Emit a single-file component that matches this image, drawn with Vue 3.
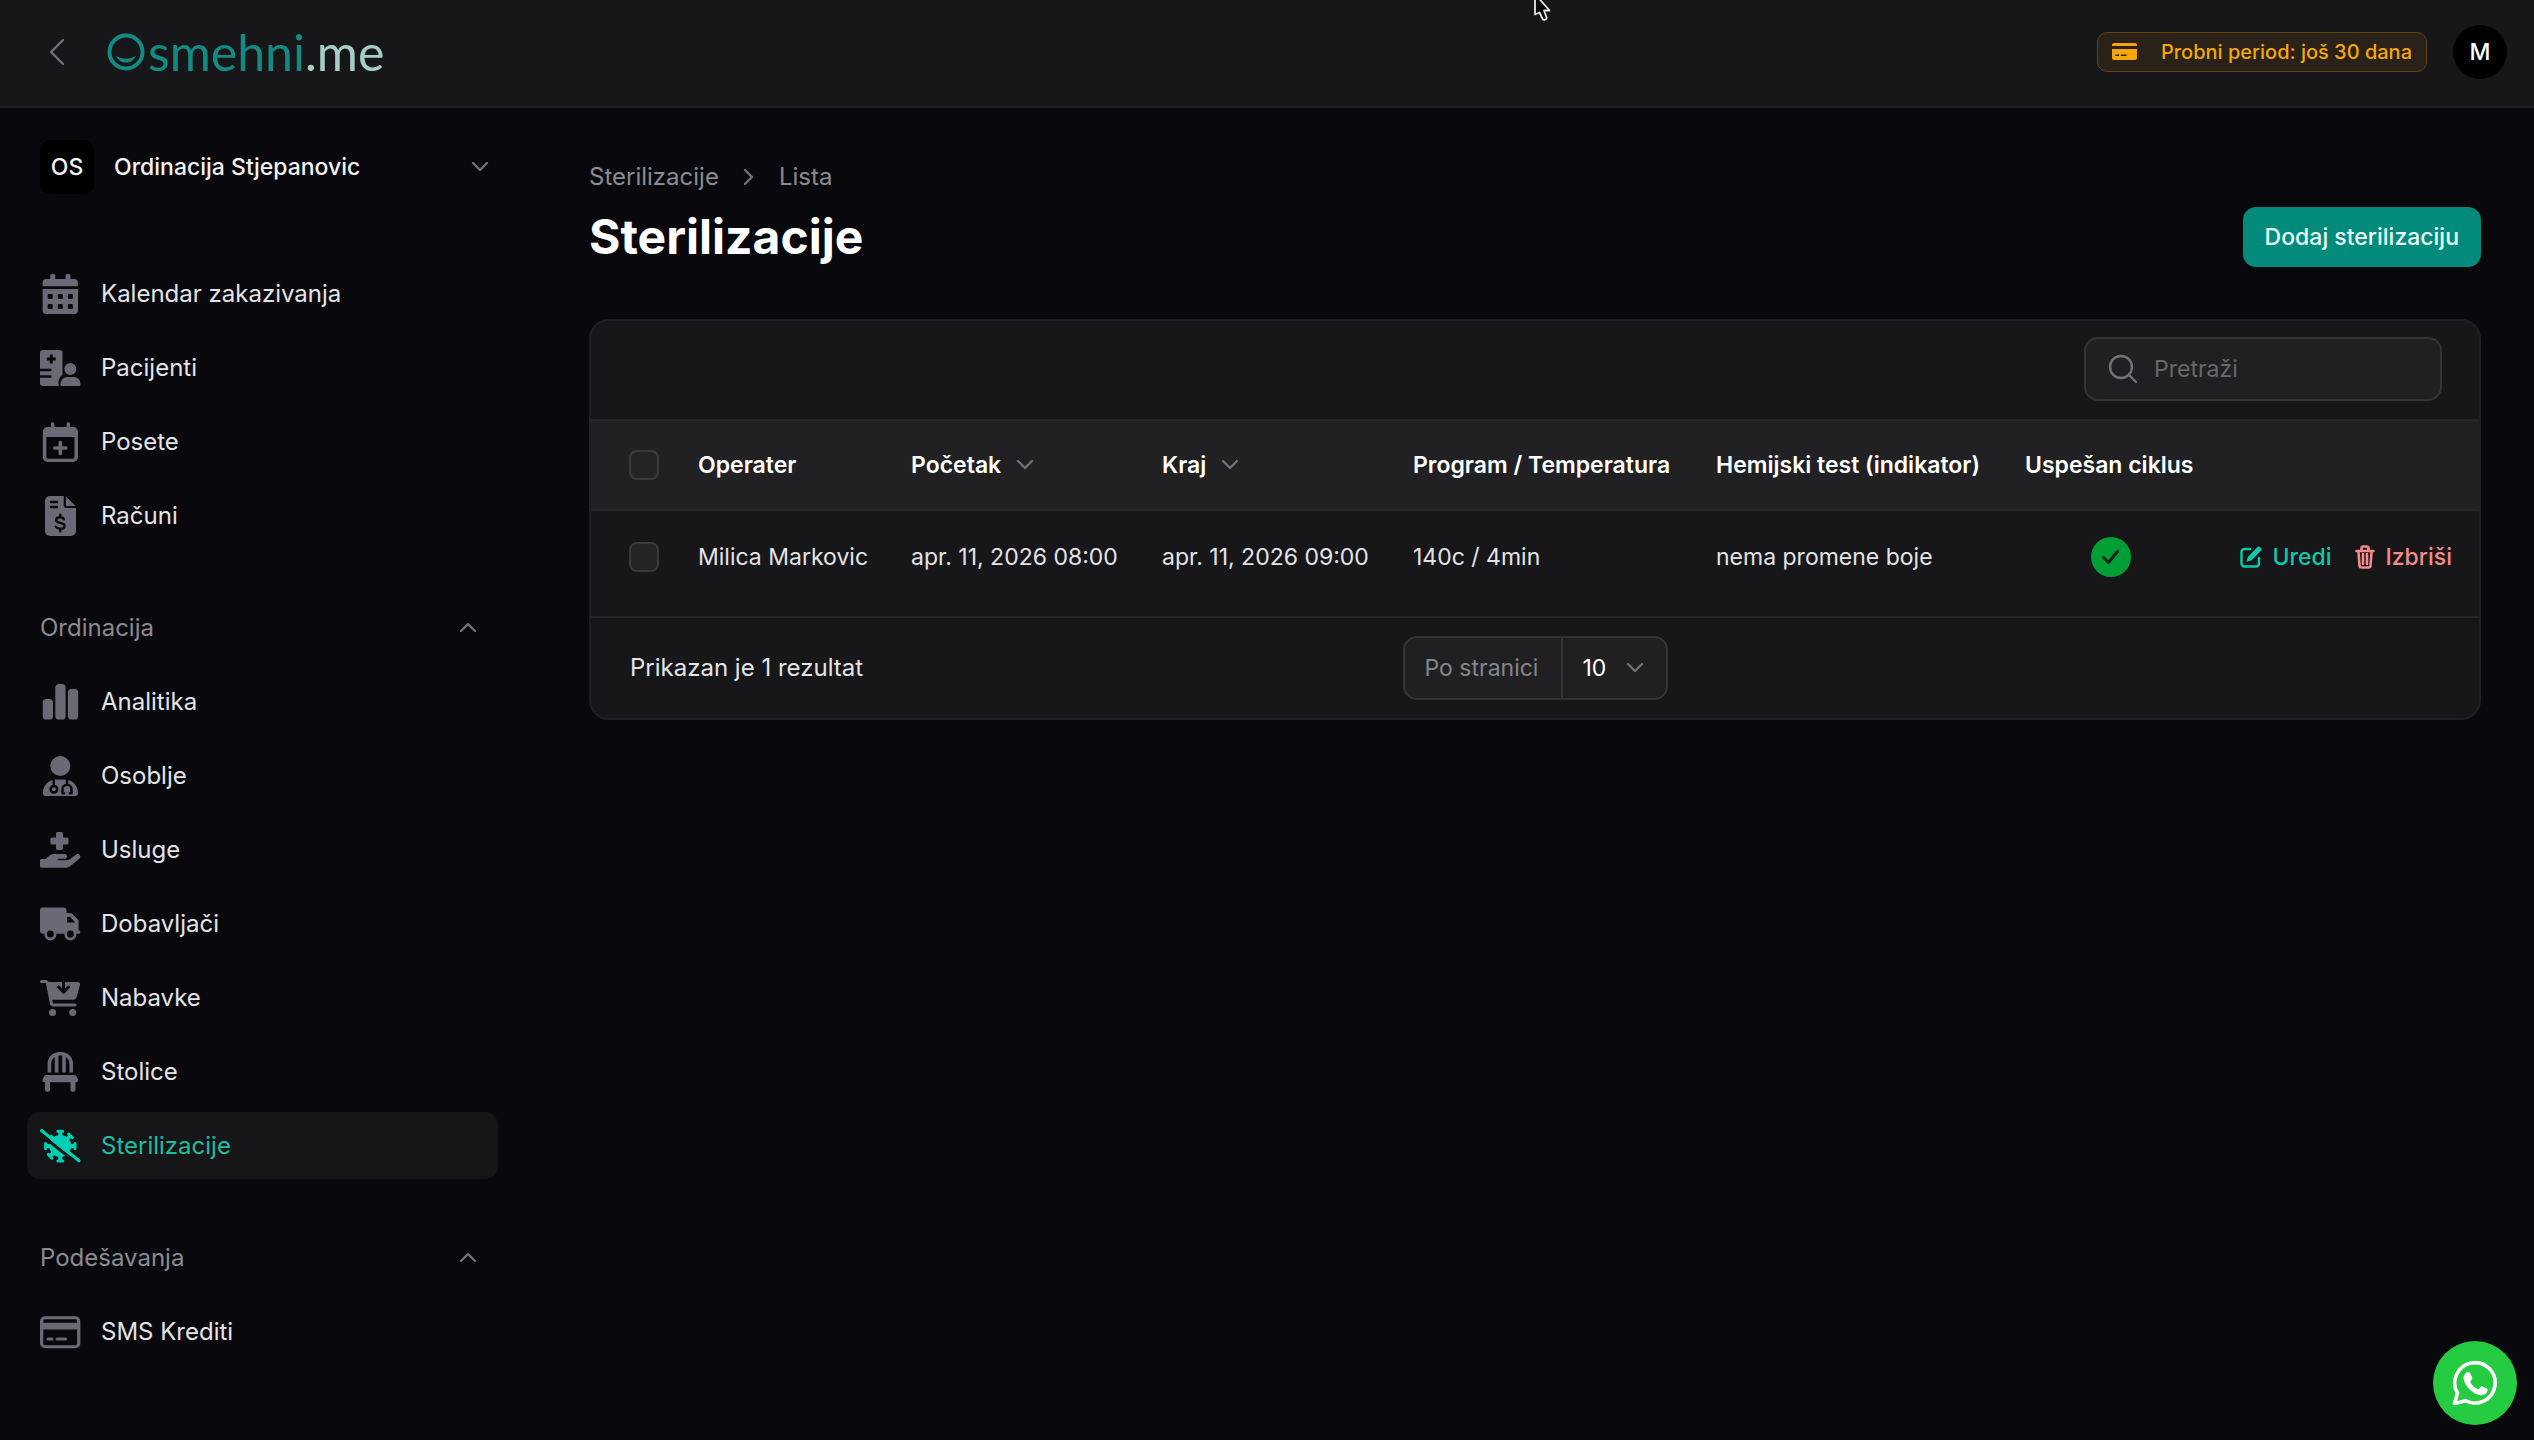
<script setup>
import { ref } from 'vue'

const mainItems = [
  { label: 'Kalendar zakazivanja', icon: 'calendar' },
  { label: 'Pacijenti', icon: 'patients' },
  { label: 'Posete', icon: 'visits' },
  { label: 'Računi', icon: 'invoice' },
]

const groups = [
  {
    label: 'Ordinacija',
    items: [
      { label: 'Analitika', icon: 'chart' },
      { label: 'Osoblje', icon: 'doctor' },
      { label: 'Usluge', icon: 'services' },
      { label: 'Dobavljači', icon: 'truck' },
      { label: 'Nabavke', icon: 'cart' },
      { label: 'Stolice', icon: 'chair' },
      { label: 'Sterilizacije', icon: 'virus', active: true },
    ],
  },
  { label: 'Podešavanja', items: [{ label: 'SMS Krediti', icon: 'card' }] },
]

const sections = [{ label: '', items: mainItems }, ...groups]

// Filled shapes on a 40 x 40 grid
const icons = {
  calendar:
    '<path fill-rule="evenodd" d="M10.3 1.5a1.5 1.5 0 0 1 1.5-1.5h2a1.5 1.5 0 0 1 1.5 1.5V5h10.2V1.500a1.500 1.500 0 0 1 1.500-1.500h2a1.500 1.500 0 0 1 1.500 1.500V5h3.700a3.700 3.700 0 0 1 3.700 3.700V12.300H2.600V8.700A3.700 3.700 0 0 1 6.300 5h4zM2.600 15h35.400v21.300a3.700 3.700 0 0 1-3.700 3.700H6.300a3.700 3.700 0 0 1-3.700-3.700zM8.700 20a1 1 0 0 0-1 1v3a1 1 0 0 0 1 1h3a1 1 0 0 0 1-1v-3a1 1 0 0 0-1-1zM18.800 20a1 1 0 0 0-1 1v3a1 1 0 0 0 1 1h3a1 1 0 0 0 1-1v-3a1 1 0 0 0-1-1zM28.900 20a1 1 0 0 0-1 1v3a1 1 0 0 0 1 1h3a1 1 0 0 0 1-1v-3a1 1 0 0 0-1-1zM8.700 30a1 1 0 0 0-1 1v3a1 1 0 0 0 1 1h3a1 1 0 0 0 1-1v-3a1 1 0 0 0-1-1zM18.800 30a1 1 0 0 0-1 1v3a1 1 0 0 0 1 1h3a1 1 0 0 0 1-1v-3a1 1 0 0 0-1-1zM28.900 30a1 1 0 0 0-1 1v3a1 1 0 0 0 1 1h3a1 1 0 0 0 1-1v-3a1 1 0 0 0-1-1z"/>',
  patients:
    '<path d="M3 2h16.500a3 3 0 0 1 3 3v22c-2.500 1.500-4 4.300-4 7.500 0 1.300 0 2.500.7 3.500H3a3 3 0 0 1-3-3v-5.300h10.500a1.200 1.200 0 0 0 0-2.400H0v-4.100h10.500a1.200 1.200 0 0 0 0-2.400H0V5a3 3 0 0 1 3-3z"/><path d="M9.800 6.500h3v3h3v3h-3v3h-3v-3h-3v-3h3z" class="cut"/><circle cx="30.300" cy="21" r="6"/><path d="M27 29h6.500c4 0 7 3 7 7.500 0 1-.6 1.500-1.500 1.500H22c-1 0-1.500-.5-1.500-1.500C20.500 32 23.500 29 27 29z"/>',
  visits:
    '<path fill-rule="evenodd" d="M11 1.700a1.700 1.700 0 0 1 3.400 0V5h12.200V1.700a1.700 1.700 0 0 1 3.400 0V5h3a5 5 0 0 1 5 5v25a5 5 0 0 1-5 5H7.800a5 5 0 0 1-5-5V10a5 5 0 0 1 5-5H11zM6.300 15v20a1.700 1.700 0 0 0 1.700 1.700h24.800a1.700 1.700 0 0 0 1.700-1.700V15z"/><path d="M20.300 20.500v11M14.800 26h11" fill="none" stroke="currentColor" stroke-width="3.600" stroke-linecap="round"/>',
  invoice:
    '<path d="M10 0h13.700v9a3 3 0 0 0 3 3H36v23a5 5 0 0 1-5 5H10a5 5 0 0 1-5-5V5a5 5 0 0 1 5-5z"/><path d="M26 .500L35.500 10H27a1 1 0 0 1-1-1z"/><path d="M11 6h6M11 11h6" class="cutline" stroke-width="2.400"/><path d="M24 23.200C23 21.800 21.500 21.300 20 21.300c-2.300 0-3.900 1-3.900 2.600 0 4.200 8.500 1.800 8.500 6 0 1.800-1.800 2.800-4.200 2.800-1.900 0-3.600-.7-4.600-2M20.200 18.600v2.500M20.200 33v2.400" class="cutline" stroke-width="2.400"/>',
  chart:
    '<rect x="2.700" y="17" width="10.300" height="20.500" rx="3.600"/><rect x="15.300" y="2" width="10.300" height="35.500" rx="3.600"/><rect x="27.900" y="7" width="10.300" height="30.500" rx="3.600"/>',
  doctor:
    '<circle cx="20.300" cy="10" r="10"/><path d="M15.500 23.400h9.800C33 23.800 38 29.500 38 37.200c0 1.800-1 2.800-2.500 2.800h-30c-1.500 0-2.600-1-2.600-2.800 0-7.700 5-13.400 12.600-13.800z"/><path d="M13.700 22.500v7.500M27 22.500v5.500" class="cutline" stroke-width="2.400"/><circle cx="13.900" cy="33.200" r="3.300" class="cutline" stroke-width="2.500"/><path d="M22.500 37.300v-4a4.500 4.500 0 0 1 9 0v4M22.500 37.200h1.700M29.800 37.200h1.700" class="cutline" stroke-width="2.500"/>',
  services:
    '<path d="M17.500 2h4A1.500 1.500 0 0 1 23 3.500V7.500h4A1.500 1.500 0 0 1 28.500 9v4a1.500 1.500 0 0 1-1.500 1.500h-4V18.500A1.500 1.500 0 0 1 21.500 20h-4A1.500 1.500 0 0 1 16 18.500V14.500H12A1.500 1.500 0 0 1 10.500 13V9A1.500 1.500 0 0 1 12 7.500h4V3.500A1.500 1.500 0 0 1 17.500 2z"/><path d="M1.500 29h4l4-3.400c1.300-1 2.800-1.600 4.500-1.600h10.500c2.800 0 3.600 3.700.8 4.800H18.500c-1 0-1 1.500 0 1.500h8.300c1 0 1.800-.3 2.500-.8l7-5c2.500-1.700 5.500 1.500 3.200 3.900L31 35.500c-1.800 1.500-3.600 2.300-6 2.300H1.500C.5 37.800 0 37.200 0 36.300v-5.800C0 29.600.5 29 1.500 29z"/>',
  truck:
    '<path d="M3 3.500h20.500a3 3 0 0 1 3 3V9h3.300c1 0 2 .4 2.700 1.100l5 5c.7.700 1.100 1.700 1.100 2.700v8.700h.4c1.800 0 1.800 3.300 0 3.300H3a3 3 0 0 1-3-3V6.500a3 3 0 0 1 3-3z"/><path d="M27 13h3.200l5 5.500H27z" class="cut"/><circle cx="10.400" cy="30.500" r="6"/><circle cx="30.400" cy="30.500" r="6"/><circle cx="10.400" cy="30" r="3.400" class="cut"/><circle cx="30.400" cy="30" r="3.400" class="cut"/>',
  cart:
    '<path d="M1.500 3.500h4.200c.8 0 1.500.6 1.700 1.400l4 20.300c.2 1 1 1.800 2.200 1.800H35" fill="none" stroke="currentColor" stroke-width="3" stroke-linecap="round" stroke-linejoin="round"/><path d="M7.500 4h30.300c1.600 0 2.600 1.200 2.200 2.800L36.700 19c-.5 1.700-1.800 2.700-3.500 2.700H10.700z"/><path d="M23.600 3v10M18.500 9l5.100 5.100L28.700 9" class="cutline" stroke-width="2.900"/><circle cx="12.500" cy="34.500" r="3.500"/><circle cx="32.700" cy="34.500" r="3.500"/>',
  chair:
    '<path d="M9.400 20.500V12A10 10 0 0 1 19.400 1.800h1.800a10 10 0 0 1 10 10.200v8.500M16.600 3v17.500M24 3v17.500" fill="none" stroke="currentColor" stroke-width="3.600"/><path d="M6.500 23h27.600c1.200 0 2 .6 2.500 1.600l1.200 2.400c1 2-.3 3.300-2 3.300H35.500V38a1.800 1.800 0 0 1-1.800 1.800h-1.400A1.800 1.800 0 0 1 30.500 38v-7.700H10V38a1.800 1.800 0 0 1-1.800 1.800H6.900A1.800 1.800 0 0 1 5.100 38v-7.700H4.800c-1.800 0-3-1.300-2-3.300L4 24.600C4.500 23.600 5.300 23 6.500 23z"/>',
  virus:
    '<circle cx="20.300" cy="20" r="11"/><path d="M20.300 5.500v29M5.800 20h29M10.100 9.800l20.400 20.400M30.500 9.800L10.100 30.200" fill="none" stroke="currentColor" stroke-width="4"/><path d="M17.800 5.300h5M17.800 34.900h5M5.600 17.500v5M35 17.500v5M28.700 8l3.700 3.700M8.200 28.400l3.700 3.700" fill="none" stroke="currentColor" stroke-width="3" stroke-linecap="round"/><path d="M-1 7.300L38.500 38.500" stroke-width="3.200" class="cutline"/><path d="M1.500 4.600L39 34.800" fill="none" stroke="currentColor" stroke-width="3.200" stroke-linecap="round"/>',
  card:
    '<path fill-rule="evenodd" d="M5 4.300h30.400a5 5 0 0 1 5 5v21.900a5 5 0 0 1-5 5H5a5 5 0 0 1-5-5V9.300a5 5 0 0 1 5-5zM5 7.300a1.700 1.700 0 0 0-1.700 1.700v1.700h33.800V9a1.700 1.700 0 0 0-1.700-1.700zM3.300 17.500v14A1.700 1.700 0 0 0 5 33.200h30.400a1.700 1.700 0 0 0 1.700-1.700v-14z"/><path d="M8 27h4M17 27h8.500" stroke="currentColor" stroke-width="3" stroke-linecap="round" fill="none"/>',
}

const query = ref('')
const perPage = ref('10')
const rows = [
  {
    operator: 'Milica Markovic',
    start: 'apr. 11, 2026 08:00',
    end: 'apr. 11, 2026 09:00',
    program: '140c / 4min',
    test: 'nema promene boje',
  },
]
</script>

<template>
  <div class="page">
    <header class="topbar">
      <button class="back" type="button" aria-label="Skupi meni">
        <svg width="16" height="28" viewBox="0 0 16 28"><path d="M14 2L2 14l12 12" class="line" /></svg>
      </button>
      <a class="logo" href="#" aria-label="Osmehni.me">
        <svg width="38" height="38" viewBox="0 0 38 38">
          <circle cx="19" cy="19" r="16.500" fill="none" stroke="currentColor" stroke-width="4" />
          <path d="M9 22.800c6 4 14 4 20 0-2 4.700-6 6.800-10 6.800s-8-2.100-10-6.800z" fill="currentColor" />
        </svg>
        <span class="wordmark">smehni<span class="tld">.me</span></span>
      </a>
      <a class="trial" href="#">
        <svg width="26" height="18" viewBox="0 0 26 18">
          <path d="M2 0h21a2 2 0 0 1 2 2v1H0V2a2 2 0 0 1 2-2z" fill="currentColor" />
          <path fill-rule="evenodd" d="M0 6h25v9a2 2 0 0 1-2 2H2a2 2 0 0 1-2-2zm4 5.500a.8.8 0 0 0 0 1.600h2.500a.8.8 0 0 0 0-1.600zm5.500 0a.8.8 0 0 0 0 1.600h4.500a.8.8 0 0 0 0-1.600z" fill="currentColor" />
        </svg>
        <span>Probni period: još 30 dana</span>
      </a>
      <button class="user" type="button">M</button>
    </header>

    <div class="layout">
      <aside class="sidebar">
        <button class="tenant" type="button">
          <span class="tenant-logo">OS</span>
          <span class="tenant-name">Ordinacija Stjepanovic</span>
          <svg width="18" height="12" viewBox="0 0 18 12"><path d="M2 2l7 7 7-7" class="line" /></svg>
        </button>
        <nav class="nav">
          <section v-for="section in sections" :key="section.label" class="nav-group">
            <button v-if="section.label" class="group-label" type="button">
              <span>{{ section.label }}</span>
              <svg width="18" height="12" viewBox="0 0 18 12"><path d="M2 9l7-7 7 7" class="line" /></svg>
            </button>
            <a
              v-for="item in section.items"
              :key="item.label"
              href="#"
              class="nav-item"
              :class="{ active: item.active }"
            >
              <svg class="nav-icon" viewBox="0 0 41 40" v-html="icons[item.icon]"></svg>
              <span>{{ item.label }}</span>
            </a>
          </section>
        </nav>
      </aside>

      <main class="main">
        <div class="heading">
          <div>
            <nav class="crumbs">
              <a href="#">Sterilizacije</a>
              <svg width="12" height="20" viewBox="0 0 12 20"><path d="M2 3l7 7-7 7" class="line" /></svg>
              <a href="#">Lista</a>
            </nav>
            <h1>Sterilizacije</h1>
          </div>
          <button class="primary" type="button">Dodaj sterilizaciju</button>
        </div>

        <section class="card">
          <div class="toolbar">
            <label class="search">
              <svg width="30" height="30" viewBox="0 0 30 30">
                <circle cx="13" cy="13" r="11" class="line" />
                <path d="M21 21l7 7" class="line" />
              </svg>
              <input v-model="query" type="search" placeholder="Pretraži" aria-label="Pretraži" />
            </label>
          </div>

          <table>
            <thead>
              <tr>
                <th class="check"><input type="checkbox" aria-label="Izaberi sve" /></th>
                <th class="operator">Operater</th>
                <th class="date">
                  <button class="sort" type="button">
                    Početak
                    <svg width="18" height="12" viewBox="0 0 18 12"><path d="M2 2l7 7 7-7" class="line" /></svg>
                  </button>
                </th>
                <th class="date">
                  <button class="sort" type="button">
                    Kraj
                    <svg width="18" height="12" viewBox="0 0 18 12"><path d="M2 2l7 7 7-7" class="line" /></svg>
                  </button>
                </th>
                <th class="program">Program / Temperatura</th>
                <th class="test">Hemijski test (indikator)</th>
                <th class="cycle">Uspešan ciklus</th>
                <th></th>
              </tr>
            </thead>
            <tbody>
              <tr v-for="row in rows" :key="row.start">
                <td class="check"><input type="checkbox" aria-label="Izaberi red" /></td>
                <td>{{ row.operator }}</td>
                <td>{{ row.start }}</td>
                <td>{{ row.end }}</td>
                <td>{{ row.program }}</td>
                <td>{{ row.test }}</td>
                <td class="status">
                  <svg width="40" height="40" viewBox="0 0 40 40">
                    <circle cx="20" cy="20" r="20" fill="#009f35" />
                    <path d="M12.500 20.500l5 5 9-11" fill="none" stroke="#17221a" stroke-width="3" stroke-linecap="round" stroke-linejoin="round" />
                  </svg>
                </td>
                <td>
                  <div class="actions">
                    <a class="edit" href="#">
                      <svg width="22" height="22" viewBox="0 0 22 22">
                        <path d="M10 3H4.500A3 3 0 0 0 1.500 6v11.500a3 3 0 0 0 3 3H16a3 3 0 0 0 3-3V12" fill="none" stroke="currentColor" stroke-width="2.400" stroke-linecap="round" />
                        <path d="M17.300 1.200a2 2 0 0 1 2.800 0l.8.800a2 2 0 0 1 0 2.800l-9.600 9.600-4.800 1.300 1.300-4.800z" fill="currentColor" />
                      </svg>
                      Uredi
                    </a>
                    <a class="delete" href="#">
                      <svg width="20" height="24" viewBox="0 0 20 24">
                        <path d="M1.500 6h17M6.500 5.500V3.500a2 2 0 0 1 2-2h3a2 2 0 0 1 2 2v2" fill="none" stroke="currentColor" stroke-width="2.600" stroke-linecap="round" />
                        <path d="M3.500 7l1 13.500A2 2 0 0 0 6.500 22.500h7a2 2 0 0 0 2-2L16.500 7M8 9v10M12 9v10" fill="none" stroke="currentColor" stroke-width="2.600" stroke-linecap="round" />
                      </svg>
                      Izbriši
                    </a>
                  </div>
                </td>
              </tr>
            </tbody>
          </table>

          <footer class="pager">
            <span class="summary">Prikazan je 1 rezultat</span>
            <div class="per-page">
              <label for="per-page">Po stranici</label>
              <div class="select">
                <select id="per-page" v-model="perPage">
                  <option>5</option>
                  <option>10</option>
                  <option>25</option>
                </select>
                <svg width="18" height="12" viewBox="0 0 18 12"><path d="M2 2l7 7 7-7" class="line" /></svg>
              </div>
            </div>
          </footer>
        </section>
      </main>
    </div>

    <button class="whatsapp" type="button" aria-label="WhatsApp">
      <svg width="46" height="46" viewBox="0 0 46 46">
        <path d="M2.500 43.500l3-10.500A20.200 20.200 0 1 1 13.500 40.700z" fill="none" stroke="#fff" stroke-width="3.600" stroke-linejoin="round" />
        <path d="M14.500 12.500c1.500-1 3-.7 3.700.8l1.900 4.300c.3.900.1 1.500-.5 2.200l-1.500 1.900c1.800 3.600 4.600 6.300 8.300 7.700l2-2.400c.6-.7 1.200-.8 2-.5l4.300 2.100c1 .5 1.100 1.300.8 2.400-.9 3-4 4.600-7 4.200C20.500 34.200 12.300 26 11.500 18.600c-.2-2.300 1-4.700 3-6.100z" fill="#fff" />
      </svg>
    </button>

    <svg class="cursor" width="20" height="22" viewBox="0 0 20 22">
      <path d="M2-6v20.500l4.500-2 3.200 6.500c1 1.800 4.600.5 3.800-1.700L11 10.500h5.500z" fill="#000" stroke="#e8e8e8" stroke-width="1.800" stroke-linejoin="round" />
    </svg>
  </div>
</template>

<style>
body {
  background: #09090d;
}
</style>

<style scoped>
* {
  box-sizing: border-box;
}

.page {
  position: relative;
  min-height: 100vh;
  background: #09090d;
  color: #e4e4e7;
  font-family: Inter, 'Noto Sans', sans-serif;
  font-size: 23px;
  line-height: 40px;
}

button,
input,
select {
  font: inherit;
  color: inherit;
  background: none;
  border: 0;
  padding: 0;
  margin: 0;
}

a {
  color: inherit;
  text-decoration: none;
}

svg {
  display: block;
  flex: none;
}

.line {
  fill: none;
  stroke: #71717a;
  stroke-width: 2.400;
  stroke-linecap: round;
  stroke-linejoin: round;
}

.topbar {
  display: flex;
  align-items: center;
  height: 108px;
  padding: 0 27px 2px 49px;
  background: #171719;
  border-bottom: 2px solid #212123;
}

.logo {
  display: flex;
  align-items: center;
  gap: 3px;
  margin-left: 42px;
  color: #138a82;
}

.wordmark {
  font-family: Lato, sans-serif;
  font-size: 50px;
  font-weight: 400;
  line-height: 50px;
}

.tld {
  color: #a5cdc6;
}

.trial {
  display: flex;
  align-items: center;
  gap: 23px;
  height: 40px;
  margin-left: auto;
  padding: 0 14px;
  border: 1px solid #60450f;
  border-radius: 10px;
  background: #2a2218;
  color: #f5a70a;
  font-size: 20px;
  font-weight: 500;
}

.user {
  width: 54px;
  height: 54px;
  margin-left: 26px;
  border-radius: 50%;
  background: #000;
  color: #fff;
  font-weight: 500;
}

.layout {
  display: flex;
}

.sidebar {
  flex: none;
  width: 535px;
  padding: 32px 37px 32px 27px;
}

.tenant {
  display: flex;
  align-items: center;
  width: 100%;
  padding: 0 9px 0 13px;
  gap: 20px;
  color: #f4f4f5;
  font-weight: 500;
  text-align: left;
}

.tenant-logo {
  width: 54px;
  height: 54px;
  border-radius: 10px;
  background: #000;
  line-height: 54px;
  text-align: center;
}

.tenant-name {
  flex: 1;
}

.nav {
  display: flex;
  flex-direction: column;
  gap: 45px;
  margin-top: 66px;
  font-size: 24px;
}

.nav-group {
  display: flex;
  flex-direction: column;
  gap: 7px;
}

.group-label {
  display: flex;
  align-items: center;
  justify-content: space-between;
  height: 67px;
  padding: 0 21px 0 13px;
  color: #8b8b92;
}

.nav-item {
  --surface: #09090d;
  display: flex;
  align-items: center;
  gap: 20px;
  height: 67px;
  padding: 0 13px;
  border-radius: 13px;
}

.nav-item.active {
  --surface: #161618;
  background: #161618;
  color: #1fbd9f;
}

.nav-icon {
  width: 41px;
  height: 40px;
  color: #6b6975;
  fill: currentColor;
  overflow: visible;
}

.nav-item.active .nav-icon {
  color: #00cfb4;
}

.nav-icon :deep(.cut) {
  fill: var(--surface);
}

.nav-icon :deep(.cutline) {
  fill: none;
  stroke: var(--surface);
  stroke-linecap: round;
  stroke-linejoin: round;
}

.main {
  flex: 1;
  min-width: 0;
  padding: 49px 53px 48px 54px;
}

.heading {
  display: flex;
  align-items: flex-end;
  justify-content: space-between;
}

.crumbs {
  display: flex;
  align-items: center;
  gap: 24px;
  color: #8b8b92;
  font-size: 24px;
}

h1 {
  margin: 10px 0 0;
  color: #fff;
  font-size: 48px;
  font-weight: 700;
  line-height: 60px;
}

.primary {
  height: 60px;
  padding: 0 22px;
  border-radius: 13px;
  background: #028b7b;
  color: #e8fffb;
  font-weight: 500;
}

.card {
  margin-top: 52px;
  border: 2px solid #202022;
  border-radius: 20px;
  background: #171719;
  overflow: hidden;
}

.toolbar {
  display: flex;
  justify-content: flex-end;
  padding: 16px 37px 18px;
}

.search {
  display: flex;
  align-items: center;
  gap: 16px;
  width: 358px;
  height: 64px;
  padding: 0 22px;
  border: 2px solid #343436;
  border-radius: 14px;
  background: #202022;
}

.search input {
  flex: 1;
  min-width: 0;
  outline: 0;
}

.search input::placeholder {
  color: #68686e;
  opacity: 1;
}

table {
  width: 100%;
  border-collapse: collapse;
  table-layout: fixed;
}

th,
td {
  padding: 0 0 0 20px;
  text-align: left;
  white-space: nowrap;
}

thead tr {
  height: 90px;
  background: #212123;
  border-top: 2px solid #272729;
  border-bottom: 2px solid #272729;
}

tbody tr {
  border-bottom: 2px solid #272729;
}

th {
  color: #fff;
  font-weight: 600;
}

td {
  height: 107px;
  padding-bottom: 13px;
}

.check {
  width: 87px;
  padding-left: 38px;
}

.check input {
  display: block;
  appearance: none;
  width: 30px;
  height: 30px;
  border: 2px solid #3a3a3d;
  border-radius: 8px;
  background: #242426;
}

.operator {
  width: 213px;
}

.date {
  width: 251px;
}

.program {
  width: 303px;
}

.test {
  width: 309px;
}

.cycle {
  width: 211px;
}

.sort {
  display: flex;
  align-items: center;
  gap: 15px;
}

.status svg {
  margin: 0 auto;
}

.status {
  padding-left: 0;
}

.actions {
  display: flex;
  justify-content: flex-end;
  gap: 24px;
  padding-right: 27px;
}

.actions a {
  display: flex;
  align-items: center;
  gap: 10px;
  font-weight: 500;
}

.edit {
  color: #0ec9ab;
}

.delete {
  color: #f58a8c;
}

.pager {
  display: grid;
  grid-template-columns: 1fr auto 1fr;
  align-items: center;
  height: 100px;
  padding: 0 39px;
}

.summary {
  font-size: 24px;
}

.per-page {
  display: flex;
  align-items: center;
  width: 265px;
  height: 64px;
  border: 2px solid #343436;
  border-radius: 14px;
  background: #202022;
}

.per-page label {
  flex: 1;
  padding-left: 20px;
  color: #85858c;
}

.select {
  position: relative;
  width: 105px;
  border-left: 2px solid #343436;
}

.select select {
  display: block;
  appearance: none;
  width: 100%;
  height: 60px;
  padding: 0 40px 0 20px;
  color: #fff;
}

.select svg {
  position: absolute;
  top: 24px;
  right: 22px;
  pointer-events: none;
}

.whatsapp {
  position: fixed;
  right: 17px;
  bottom: 15px;
  display: grid;
  place-items: center;
  width: 84px;
  height: 84px;
  border-radius: 50%;
  background: #25cb40;
}

.cursor {
  position: absolute;
  top: 0;
  left: 1533px;
  pointer-events: none;
}
</style>
